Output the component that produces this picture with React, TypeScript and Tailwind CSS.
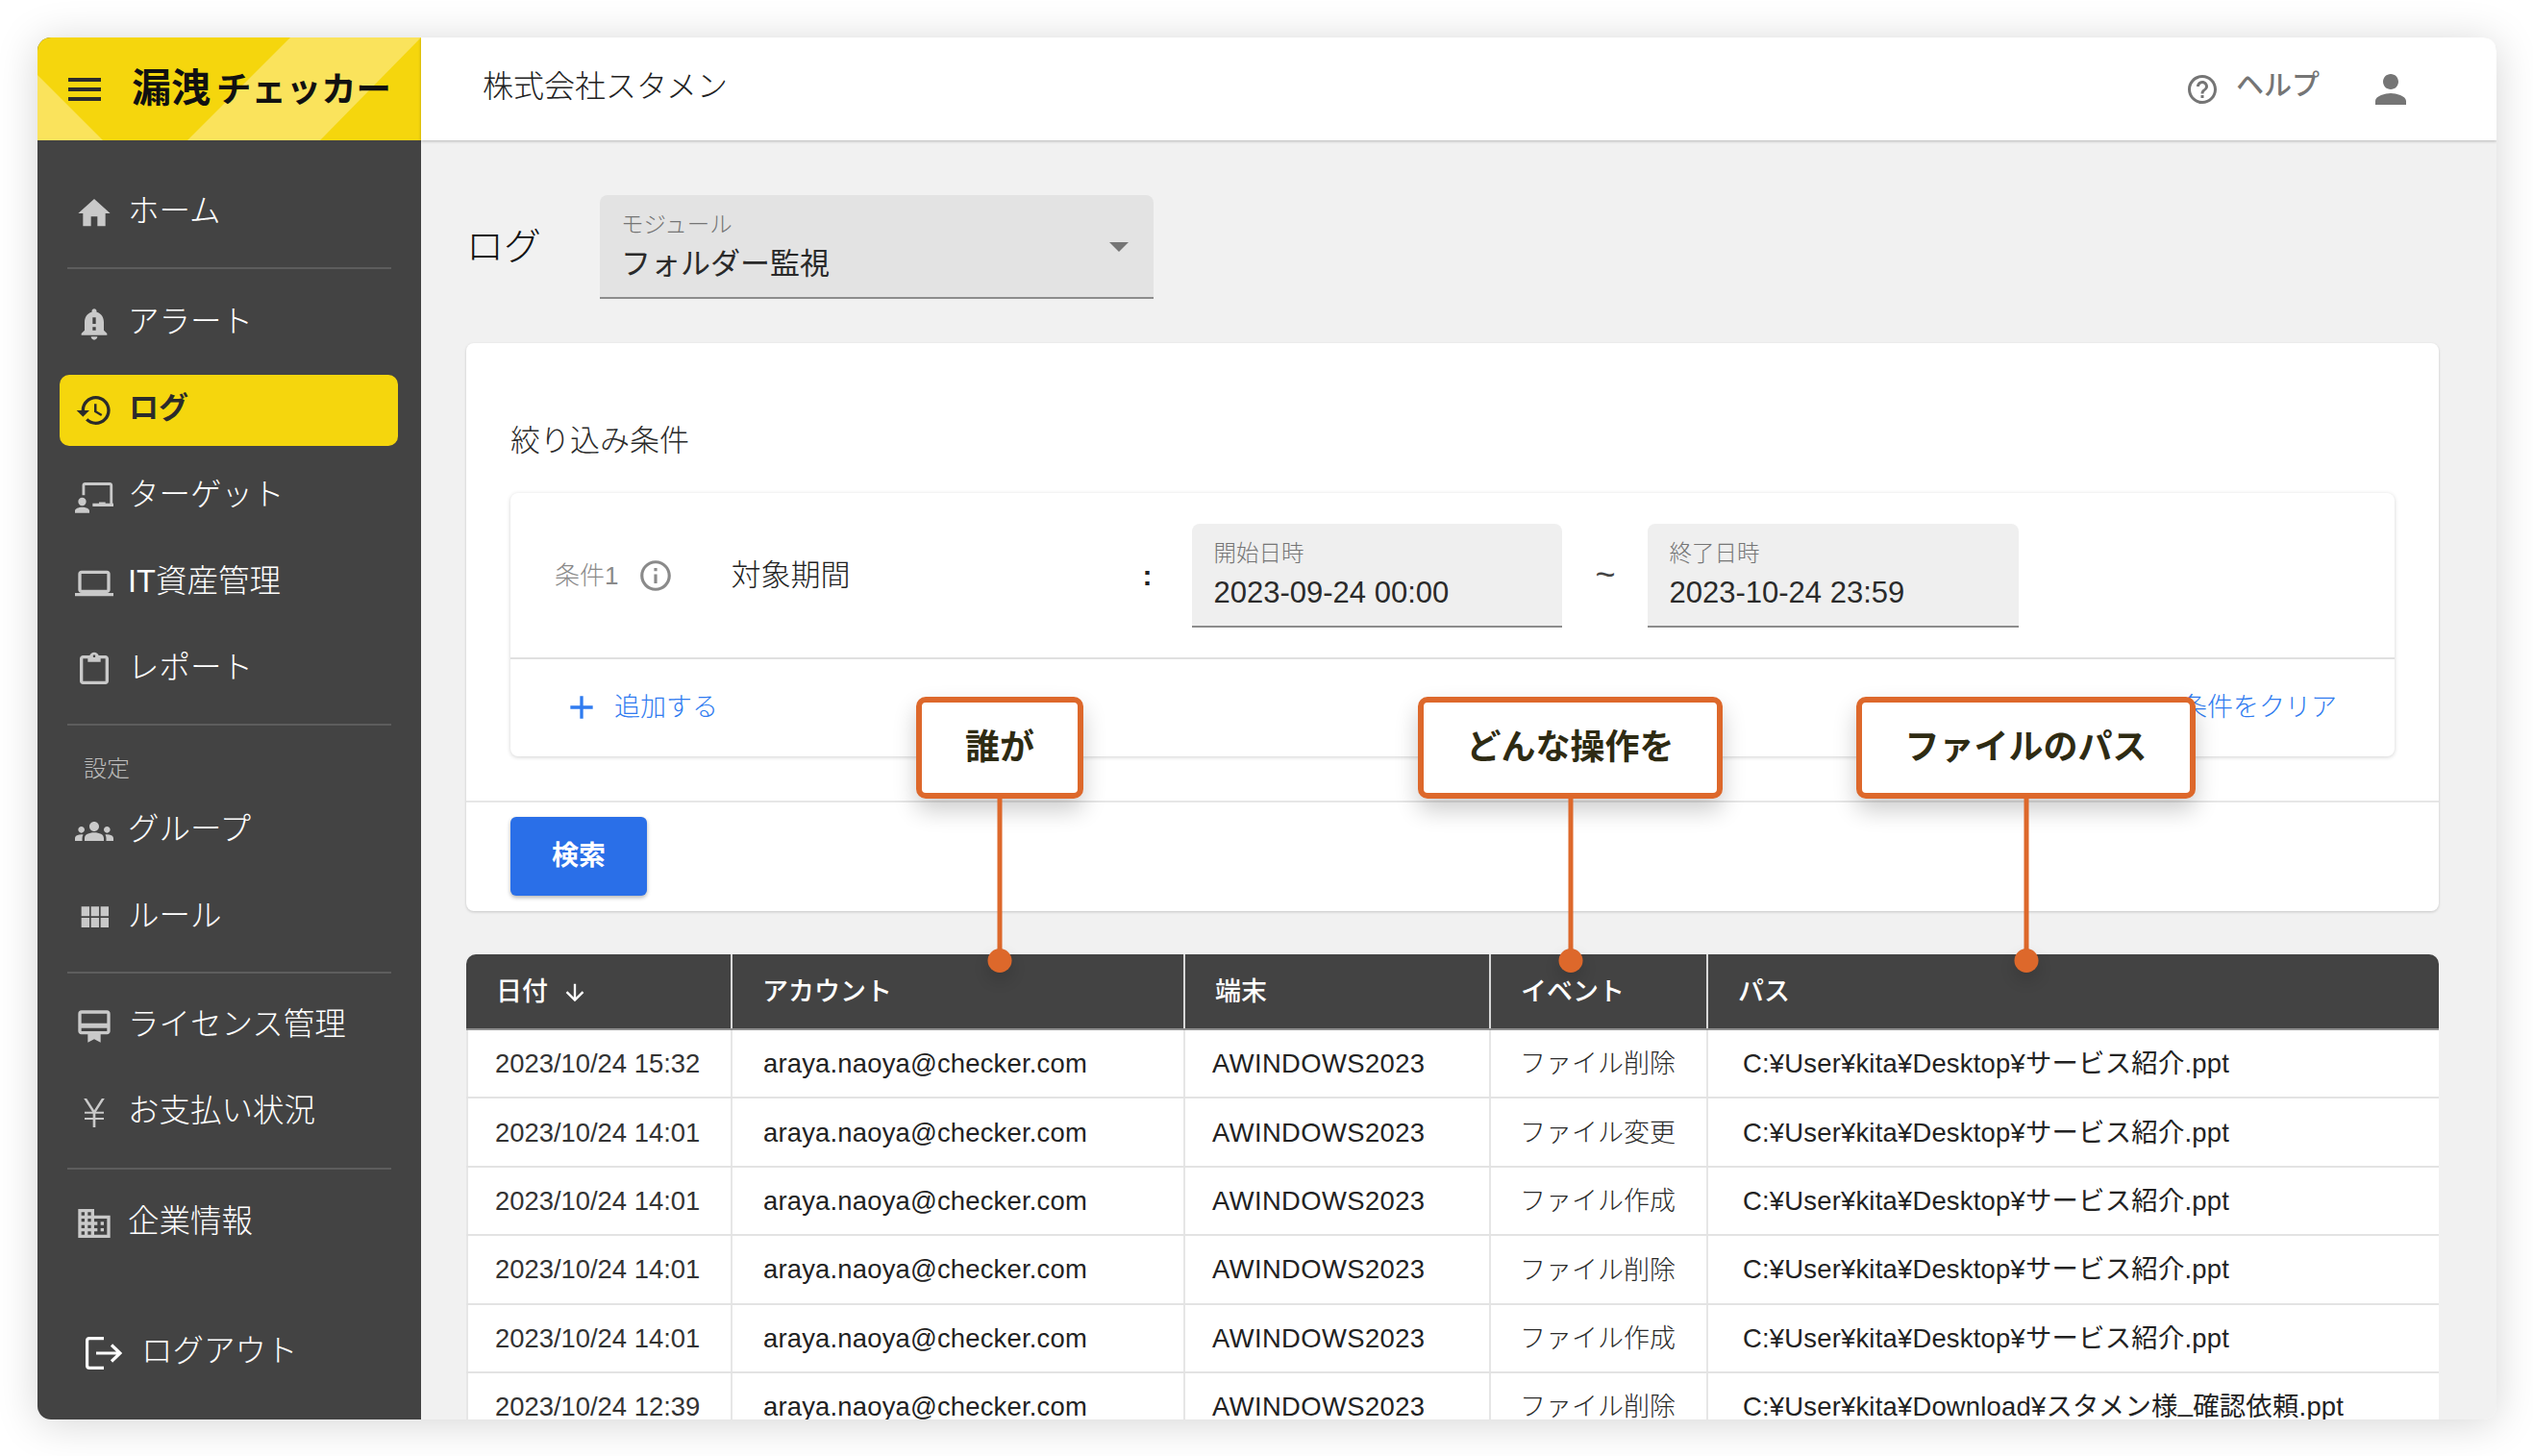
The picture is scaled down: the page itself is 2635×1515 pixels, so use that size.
import React from "react";

const P: Record<string, string> = {
  home: "M10 20v-6h4v6h5v-8h3L12 3 2 12h3v8z",
  bell: "M18 16v-5c0-3.07-1.63-5.64-4.5-6.32V4c0-.83-.67-1.5-1.5-1.5s-1.5.67-1.5 1.5v.68C7.64 5.36 6 7.92 6 11v5l-2 2v1h16v-1l-2-2zm-5 0h-2v-2h2v2zm0-4h-2V8h2v4zm-1 10c1.1 0 2-.9 2-2h-4c0 1.1.9 2 2 2z",
  history: "M13 3c-4.97 0-9 4.03-9 9H1l3.89 3.89.07.14L9 12H6c0-3.87 3.13-7 7-7s7 3.13 7 7-3.13 7-7 7c-1.93 0-3.68-.79-4.94-2.06l-1.42 1.42C8.27 19.99 10.51 21 13 21c4.97 0 9-4.03 9-9s-4.03-9-9-9zm-1 5v5l4.28 2.54.72-1.21-3.5-2.08V8H12z",
  target: "M4.5 11V4.8C4.5 3.8 5.3 3 6.3 3h15.4c1 0 1.8.8 1.8 1.8v11.2h.5v2h-13v-2H21.800V4.800H6.200V11zM15 15.300h4v.8h-4zM4.500 12.500a2.500 2.500 0 1 1 0 5 2.500 2.500 0 0 1 0-5zM4.500 18.500c2.500 0 4.500 1 4.500 2.200V22H0v-1.300c0-1.200 2-2.200 4.500-2.200z",
  laptop: "M20 18c1.100 0 1.990-.9 1.990-2L22 6c0-1.100-.9-2-2-2H4c-1.100 0-2 .9-2 2v10c0 1.100.9 2 2 2H0v2h24v-2h-4zM4 6h16v10H4V6z",
  report: "M19 3h-4.180C14.400 1.840 13.300 1 12 1s-2.400.84-2.820 2H5c-1.100 0-2 .9-2 2v14c0 1.100.9 2 2 2h14c1.100 0 2-.9 2-2V5c0-1.100-.9-2-2-2zm-7-.25c.41 0 .75.34.75.75s-.34.75-.75.75-.75-.34-.75-.75.34-.75.75-.75zM19 19H5V5h3v2h8V5h3v14z",
  groups: "M12 12.750c1.630 0 3.070.39 4.240.9 1.080.48 1.760 1.560 1.760 2.730V18H6v-1.610c0-1.180.68-2.260 1.760-2.730 1.170-.52 2.610-.91 4.240-.91zM4 13c1.100 0 2-.9 2-2s-.9-2-2-2-2 .9-2 2 .9 2 2 2zm1.130 1.100c-.37-.06-.74-.1-1.130-.1-.99 0-1.930.21-2.780.58C.48 14.900 0 15.620 0 16.430V18h4.500v-1.610c0-.83.23-1.610.63-2.290zM20 13c1.100 0 2-.9 2-2s-.9-2-2-2-2 .9-2 2 .9 2 2 2zm4 3.430c0-.81-.48-1.530-1.220-1.850-.85-.37-1.790-.58-2.780-.58-.39 0-.76.04-1.130.1.4.68.63 1.460.63 2.290V18H24v-1.570zM12 6c1.660 0 3 1.340 3 3s-1.340 3-3 3-3-1.340-3-3 1.340-3 3-3z",
  grid: "M4 11h5V5H4v6zm0 7h5v-6H4v6zm6 0h5v-6h-5v6zm6 0h5v-6h-5v6zm-6-7h5V5h-5v6zm6-6v6h5V5h-5z",
  license: "M20 2H4c-1.110 0-2 .89-2 2v11c0 1.110.89 2 2 2h4v5l4-2 4 2v-5h4c1.110 0 2-.89 2-2V4c0-1.110-.89-2-2-2zm0 13H4v-2h16v2zm0-5H4V4h16v6z",
  yen: "M13.200 11.200H18v1.200h-5.200v2.600H18v1.200h-5.200V21h-1.600v-4.800H6V15h5.200v-2.600H6v-1.200h4.800L5.500 3h1.800L12 10.300 16.700 3h1.800z",
  business: "M12 7V3H2v18h20V7H12zM6 19H4v-2h2v2zm0-4H4v-2h2v2zm0-4H4V9h2v2zm0-4H4V5h2v2zm4 12H8v-2h2v2zm0-4H8v-2h2v2zm0-4H8V9h2v2zm0-4H8V5h2v2zm10 12h-8v-2h2v-2h-2v-2h2v-2h-2V9h8v10zm-2-8h-2v2h2v-2zm0 4h-2v2h2v-2z",
  help: "M11 18h2v-2h-2v2zm1-16C6.480 2 2 6.480 2 12s4.480 10 10 10 10-4.480 10-10S17.520 2 12 2zm0 18c-4.410 0-8-3.590-8-8s3.590-8 8-8 8 3.590 8 8-3.590 8-8 8zm0-14c-2.210 0-4 1.790-4 4h2c0-1.100.9-2 2-2s2 .9 2 2c0 2-3 1.750-3 5h2c0-2.250 3-2.500 3-5 0-2.210-1.790-4-4-4z",
  person: "M12 12c2.210 0 4-1.790 4-4s-1.790-4-4-4-4 1.790-4 4 1.790 4 4 4zm0 2c-2.670 0-8 1.340-8 4v2h16v-2c0-2.660-5.330-4-8-4z",
  info: "M11 7h2v2h-2zm0 4h2v6h-2zm1-9C6.480 2 2 6.480 2 12s4.480 10 10 10 10-4.480 10-10S17.520 2 12 2zm0 18c-4.410 0-8-3.590-8-8s3.590-8 8-8 8 3.590 8 8-3.590 8-8 8z",
  add: "M19 13h-6v6h-2v-6H5v-2h6V5h2v6h6v2z",
  down: "M20 12l-1.410-1.410L13 16.170V4h-2v12.170l-5.580-5.590L4 12l8 8 8-8z",
};

function Icon({ name, className }: { name: string; className: string }) {
  return (
    <svg viewBox="0 0 24 24" className={className} fill="currentColor" aria-hidden="true">
      <path d={P[name]} />
    </svg>
  );
}

function NavItem({ icon, label, active }: { icon: string; label: string; active?: boolean }) {
  if (active) {
    return (
      <div className="h-[90px] pl-[23px] pr-[24px] py-[8px]">
        <div className="flex h-[74px] items-center rounded-[10px] bg-[#f5d60d] pl-[16px] text-[#2b2b2b]">
          <Icon name={icon} className="w-[40px] h-[40px] shrink-0" />
          <span className="ml-[16px] pb-[4px] text-[31px] font-bold leading-[40px]">{label}</span>
        </div>
      </div>
    );
  }
  return (
    <div className="flex h-[90px] items-center pl-[39px]">
      <Icon name={icon} className="w-[40px] h-[40px] shrink-0 text-[#c9c9c9]" />
      <span className="ml-[15px] pb-[4px] text-[32.500px] font-light leading-[40px] text-white">{label}</span>
    </div>
  );
}

function Divider({ className }: { className: string }) {
  return <div className={`mx-[31px] h-[2px] bg-[#5d5d5d] ${className}`} />;
}

function Field({ label, value, widthClass, bg }: { label: string; value: string; widthClass: string; bg: string }) {
  return (
    <div className={`relative h-[108px] shrink-0 rounded-t-[8px] border-b-2 border-[#8c8c8c] pl-[22px] pt-[15px] ${widthClass} ${bg}`}>
      <div className="text-[23.500px] font-light leading-[32px] text-[#757575]">{label}</div>
      <div className="pt-[1px] text-[31px] leading-[48px] text-[#2a2a2a]">{value}</div>
    </div>
  );
}

const colClass = "grid grid-cols-[275px_471px_318px_226px_762px]";

const rows = [
  ["2023/10/24 15:32", "ファイル削除", "C:¥User¥kita¥Desktop¥サービス紹介.ppt"],
  ["2023/10/24 14:01", "ファイル変更", "C:¥User¥kita¥Desktop¥サービス紹介.ppt"],
  ["2023/10/24 14:01", "ファイル作成", "C:¥User¥kita¥Desktop¥サービス紹介.ppt"],
  ["2023/10/24 14:01", "ファイル削除", "C:¥User¥kita¥Desktop¥サービス紹介.ppt"],
  ["2023/10/24 14:01", "ファイル作成", "C:¥User¥kita¥Desktop¥サービス紹介.ppt"],
  ["2023/10/24 12:39", "ファイル削除", "C:¥User¥kita¥Download¥スタメン様_確認依頼.ppt"],
];

function PathText({ value }: { value: string }) {
  const parts = value.split("_");
  if (parts.length === 1) return <span>{value}</span>;
  return (
    <span>
      {parts[0]}
      <span className="align-[5px] leading-[0]">_</span>
      {parts[1]}
    </span>
  );
}

function Callout({ text, className }: { text: string; className: string }) {
  return (
    <div className={`absolute top-[725px] flex h-[106px] items-center justify-center rounded-[10px] border-[6px] border-[#dd682b] bg-white text-[36px] font-bold text-[#2e2b13] shadow-[0_12px_24px_rgba(0,0,0,0.2)] ${className}`}>
      {text}
      <div className="absolute left-1/2 top-[calc(100%+6px)] h-[162px] w-[5px] -translate-x-1/2 bg-[#dd682b]" />
      <div className="absolute left-1/2 top-[calc(100%+162px)] h-[25px] w-[25px] -translate-x-1/2 rounded-full bg-[#dd682b] shadow-[0_8px_16px_rgba(0,0,0,0.15)]" />
    </div>
  );
}

export default function App() {
  return (
    <div className="relative h-[1515px] w-[2635px] overflow-hidden bg-white pl-[39px] pt-[39px] font-['Liberation_Sans','Noto_Sans_CJK_JP',sans-serif]">
      <div className="flex h-[1438px] w-[2558px] overflow-hidden rounded-[14px] shadow-[0_4px_44px_rgba(0,0,0,0.17)]">
        {/* Sidebar */}
        <aside className="flex w-[399px] shrink-0 flex-col bg-[#434343]">
          <div className="relative flex h-[107px] shrink-0 items-center bg-[#f5d60d] pl-[32px]">
            <svg viewBox="0 0 399 107" className="absolute inset-0 h-full w-full" aria-hidden="true">
              <polygon points="0,39 68,107 0,107" fill="#fae35c" />
              <polygon points="263,0 399,0 294,107 156,107" fill="#fae35c" />
            </svg>
            <div className="relative flex items-center">
              <svg viewBox="0 0 34 24" className="h-[24px] w-[34px]" fill="#2b2b2b" aria-hidden="true">
                <rect x="0" y="0" width="34" height="4" />
                <rect x="0" y="10" width="34" height="4" />
                <rect x="0" y="20" width="34" height="4" />
              </svg>
              <div className="ml-[32px] flex items-baseline font-bold leading-[48px] text-[#111]">
                <span className="text-[41px]">漏洩</span>
                <span className="ml-[6px] text-[36.400px]">チェッカー</span>
              </div>
            </div>
          </div>

          <nav className="flex flex-1 flex-col pt-[31px]">
            <NavItem icon="home" label="ホーム" />
            <Divider className="mb-[12px] mt-[11px]" />
            <NavItem icon="bell" label="アラート" />
            <NavItem icon="history" label="ログ" active />
            <NavItem icon="target" label="ターゲット" />
            <NavItem icon="laptop" label="IT資産管理" />
            <NavItem icon="report" label="レポート" />
            <Divider className="mt-[11px]" />
            <div className="flex h-[65px] items-end pb-[4px] pl-[48px] text-[24px] font-light leading-[32px] text-[#bdbdbd]">設定</div>
            <NavItem icon="groups" label="グループ" />
            <NavItem icon="grid" label="ルール" />
            <Divider className="mb-[10px] mt-[11px]" />
            <NavItem icon="license" label="ライセンス管理" />
            <NavItem icon="yen" label="お支払い状況" />
            <Divider className="mb-[11px] mt-[12px]" />
            <NavItem icon="business" label="企業情報" />
            <div className="mb-[24px] mt-auto flex h-[90px] items-center pl-[50px]">
              <svg viewBox="0 0 38 34" className="h-[34px] w-[38px]" fill="none" stroke="#fff" strokeWidth="3.200" aria-hidden="true">
                <path d="M19 1.600H4a2.400 2.400 0 0 0-2.400 2.400v26a2.400 2.400 0 0 0 2.400 2.400h15" />
                <path d="M11 17h25M27 8.500 36 17l-9 8.500" />
              </svg>
              <span className="ml-[20px] pb-[4px] text-[32.500px] font-light leading-[40px] text-white">ログアウト</span>
            </div>
          </nav>
        </aside>

        {/* Main */}
        <main className="flex min-w-0 flex-1 flex-col bg-[#f1f1f1]">
          <header className="relative flex h-[107px] shrink-0 items-center justify-between bg-white pl-[64px] pr-[86px] shadow-[0_1px_3px_rgba(0,0,0,0.25)]">
            <div className="pb-[6px] text-[32px] font-light text-[#222]">株式会社スタメン</div>
            <div className="flex items-center text-[#757575]">
              <Icon name="help" className="h-[36px] w-[36px]" />
              <span className="ml-[17px] pb-[5px] text-[29px] font-medium">ヘルプ</span>
              <Icon name="person" className="ml-[50px] h-[48px] w-[48px]" />
            </div>
          </header>

          <div className="min-h-0 flex-1 pl-[47px] pr-[60px]">
            <div className="mt-[57px] flex items-center">
              <h1 className="w-[139px] text-[39px] font-light leading-[48px] text-[#111]">ログ</h1>
              <Field label="モジュール" value="フォルダー監視" widthClass="w-[576px]" bg="bg-[#e3e3e3]" />
              <div className="relative -ml-[46px] h-0 w-0 border-x-[10px] border-t-[10px] border-x-transparent border-t-[#757575]" />
            </div>

            <section className="mt-[46px] h-[591px] rounded-[8px] bg-white shadow-[0_1px_3px_rgba(0,0,0,0.18)]">
              <div className="h-[478px] border-b-2 border-[#e6e6e6] px-[46px]">
                <div className="pt-[83px] text-[31px] font-light leading-[38px] text-[#2a2a2a]">絞り込み条件</div>
                <div className="mt-[35px] h-[274px] rounded-[8px] bg-white shadow-[0_1px_4px_rgba(0,0,0,0.18)]">
                  <div className="flex h-[173px] items-center border-b-2 border-[#e0e0e0] pl-[46px]">
                    <span className="pt-[2px] text-[26px] font-light text-[#8a8a8a]">条件1</span>
                    <Icon name="info" className="ml-[20px] mt-[1px] h-[38px] w-[38px] text-[#8a8a8a]" />
                    <span className="ml-[59px] w-[428px] pt-[2px] text-[31px] font-light text-[#222]">対象期間</span>
                    <span className="w-[52px] text-[30px] font-bold text-[#222]">:</span>
                    <Field label="開始日時" value="2023-09-24 00:00" widthClass="w-[385px]" bg="bg-[#efefef]" />
                    <span className="w-[89px] pb-[2px] text-center text-[36px] font-light text-[#444]">~</span>
                    <Field label="終了日時" value="2023-10-24 23:59" widthClass="w-[386px]" bg="bg-[#efefef]" />
                  </div>
                  <div className="flex h-[99px] items-center justify-between pl-[54px] pr-[60px] text-[27px] text-[#2f7bf0]">
                    <div className="flex items-center">
                      <Icon name="add" className="h-[40px] w-[40px]" />
                      <span className="ml-[14px] pt-[2px] font-light">追加する</span>
                    </div>
                    <span className="pt-[2px] font-light">条件をクリア</span>
                  </div>
                </div>
              </div>
              <div className="pl-[46px] pt-[15px]">
                <button className="flex h-[82px] w-[142px] items-center justify-center rounded-[6px] bg-[#2a6fe8] text-[28px] font-bold text-white shadow-[0_2px_4px_rgba(0,0,0,0.3)]">検索</button>
              </div>
            </section>

            <section className="mt-[45px] w-[2052px] overflow-hidden rounded-t-[10px]">
              <div className={`${colClass} h-[79px] border-b-2 border-[#8f8f8f] bg-[#434343] text-[27px] font-medium text-white`}>
                <div className="flex items-center pl-[31px] pt-[2px]">
                  日付
                  <Icon name="down" className="ml-[14px] h-[28px] w-[28px]" />
                </div>
                <div className="flex items-center border-l-2 border-[#d8d8d8] pl-[31px] pt-[2px]">アカウント</div>
                <div className="flex items-center border-l-2 border-[#d8d8d8] pl-[31px] pt-[2px]">端末</div>
                <div className="flex items-center border-l-2 border-[#d8d8d8] pl-[31px] pt-[2px]">イベント</div>
                <div className="flex items-center border-l-2 border-[#d8d8d8] pl-[31px] pt-[2px]">パス</div>
              </div>
              {rows.map((r, i) => (
                <div key={i} className={`${colClass} h-[71.400px] border-b-2 border-[#e3e3e3] bg-white text-[27.400px] text-[#333]`}>
                  <div className="flex items-center border-l-2 border-[#e6e6e6] pl-[28px]">{r[0]}</div>
                  <div className="flex items-center border-l-2 border-[#e6e6e6] pl-[32px] tracking-[0.2px] text-[#222]">araya.naoya@checker.com</div>
                  <div className="flex items-center border-l-2 border-[#e6e6e6] pl-[28px] tracking-[0.4px] text-[#222]">AWINDOWS2023</div>
                  <div className="flex items-center border-l-2 border-[#e6e6e6] pl-[30px] pt-[2px] text-[27px] font-light text-[#2a2a2a]">{r[1]}</div>
                  <div className="flex items-center border-l-2 border-[#e6e6e6] pl-[36px] tracking-[0.22px] text-[#222]"><PathText value={r[2]} /></div>
                </div>
              ))}
            </section>
          </div>
        </main>
      </div>

      <Callout text="誰が" className="left-[953px] w-[174px]" />
      <Callout text="どんな操作を" className="left-[1475px] w-[317px]" />
      <Callout text="ファイルのパス" className="left-[1931px] w-[353px]" />
    </div>
  );
}
